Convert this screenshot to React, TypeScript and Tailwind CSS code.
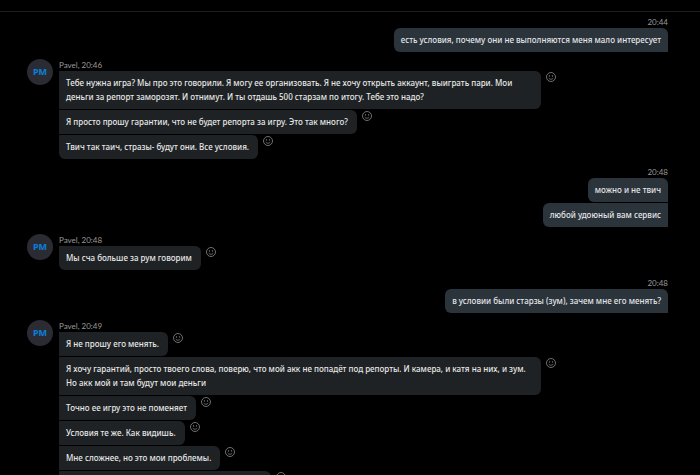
type Message = { text: string; clipped?: boolean };
type Group = { author?: string; initials?: string; time: string; messages: Message[] };

const groups: Group[] = [
  { time: "20:44", messages: [{ text: "есть условия, почему они не выполняются меня мало интересует" }] },
  {
    author: "Pavel",
    initials: "PM",
    time: "20:46",
    messages: [
      {
        text: "Тебе нужна игра? Мы про это говорили. Я могу ее организовать. Я не хочу открыть аккаунт, выиграть пари. Мои деньги за репорт заморозят. И отнимут. И ты отдашь 500 старзам по итогу. Тебе это надо?",
      },
      { text: "Я просто прошу гарантии, что не будет репорта за игру. Это так много?" },
      { text: "Твич так таич, стразы- будут они. Все условия." },
    ],
  },
  { time: "20:48", messages: [{ text: "можно и не твич" }, { text: "любой удоюный вам сервис" }] },
  { author: "Pavel", initials: "PM", time: "20:48", messages: [{ text: "Мы сча больше за рум говорим" }] },
  { time: "20:48", messages: [{ text: "в условии были старзы (зум), зачем мне его менять?" }] },
  {
    author: "Pavel",
    initials: "PM",
    time: "20:49",
    messages: [
      { text: "Я не прошу его менять." },
      {
        text: "Я хочу гарантий, просто твоего слова, поверю, что мой акк не попадёт под репорты. И камера, и катя на них, и зум. Но акк мой и там будут мои деньги",
      },
      { text: "Точно ее игру это не поменяет" },
      { text: "Условия те же. Как видишь." },
      { text: "Мне сложнее, но это мои проблемы." },
      { text: "", clipped: true },
    ],
  },
];

function ReactButton() {
  return (
    <button type="button" aria-label="React" className="ml-[5px] mt-px size-[10px] shrink-0 text-[#8b8b8b]">
      <svg viewBox="0 0 20 20" className="block size-full" fill="none" stroke="currentColor" strokeWidth="1.6">
        <circle cx="10" cy="10" r="9" />
        <path d="M6 12.8c1.2 1.2 2.5 1.6 4 1.6s2.8-.4 4-1.6" strokeLinecap="round" />
        <circle cx="7" cy="7.8" r="1.3" fill="currentColor" stroke="none" />
        <circle cx="13" cy="7.8" r="1.3" fill="currentColor" stroke="none" />
      </svg>
    </button>
  );
}

function Incoming({ group }: { group: Group }) {
  return (
    <section className="flex items-start gap-[6px]">
      <div className="flex size-[26px] shrink-0 items-center justify-center rounded-full bg-[#2b2c33] text-[9px] font-bold text-[#0a80dc]">
        {group.initials}
      </div>
      <div className="min-w-0">
        <div className="h-3 font-['Lato','Noto_Sans',sans-serif] text-[8px] font-normal leading-3 text-[#9a9a9a]">
          {group.author}, {group.time}
        </div>
        {group.messages.map((message, i) => (
          <div key={i} className="mb-px flex items-start">
            <p
              className={`max-w-[482px] rounded-r-[6px] bg-[#1f2224] py-[5px] pl-[7px] pr-[9px] text-[#e8e8e8] ${
                i === group.messages.length - 1 ? "rounded-bl-[6px]" : ""
              } ${message.clipped ? "h-6 w-[212px]" : ""}`}
            >
              {message.text}
            </p>
            <ReactButton />
          </div>
        ))}
      </div>
    </section>
  );
}

function Outgoing({ group }: { group: Group }) {
  return (
    <section className="flex flex-col items-end">
      <div className="h-3 font-['Lato','Noto_Sans',sans-serif] text-[8px] font-normal leading-3 text-[#9a9a9a]">
        {group.time}
      </div>
      {group.messages.map((message, i) => (
        <p
          key={i}
          className={`mb-px max-w-[482px] rounded-l-[6px] bg-[#2b333b] px-[7px] py-[5px] text-[#e4e6e8] ${
            i === 0 ? "rounded-tr-[6px]" : ""
          }`}
        >
          {message.text}
        </p>
      ))}
    </section>
  );
}

export default function App() {
  return (
    <div className="flex h-screen flex-col overflow-hidden bg-black font-['Noto_Sans','Open_Sans',sans-serif] text-[8px] font-medium leading-[14px]">
      <header className="h-3 shrink-0 border-b border-[#1d1d1d]" />
      <main className="flex flex-col gap-[6px] pl-[27px] pr-8 pt-1">
        {groups.map((group, i) =>
          group.author ? <Incoming key={i} group={group} /> : <Outgoing key={i} group={group} />,
        )}
      </main>
    </div>
  );
}
